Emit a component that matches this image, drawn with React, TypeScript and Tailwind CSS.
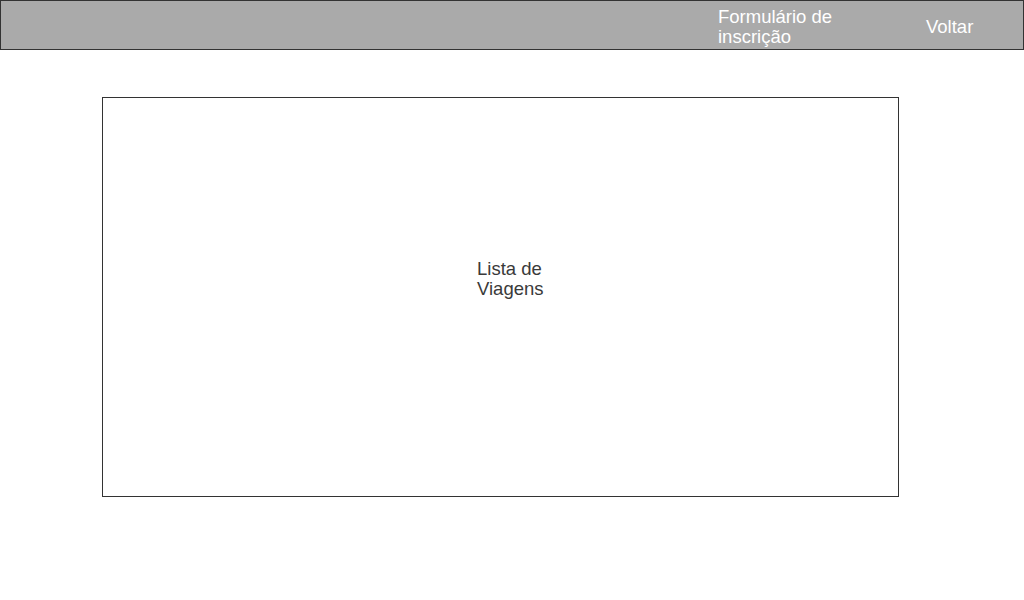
export default function App() {
  return (
    <div className="min-h-[600px] w-full bg-white font-['Liberation_Sans',Arial,sans-serif]">
      <header className="flex h-[50px] w-full items-start border border-[#333333] bg-[#aaaaaa] pt-[5.5px] text-[18.5px] leading-[20.7px] text-white">
        <div className="ml-[717px] w-[126px]">Formulário de inscrição</div>
        <div className="ml-[82px] pt-[10px]">Voltar</div>
      </header>
      <main className="pl-[102px] pt-[47px]">
        <div className="h-[400px] w-[797px] border border-[#333333] pl-[374px] pt-[160.6px]">
          <p className="w-[80px] text-[18.5px] leading-[20.7px] text-[#3a3a3a]">Lista de Viagens</p>
        </div>
      </main>
    </div>
  );
}
